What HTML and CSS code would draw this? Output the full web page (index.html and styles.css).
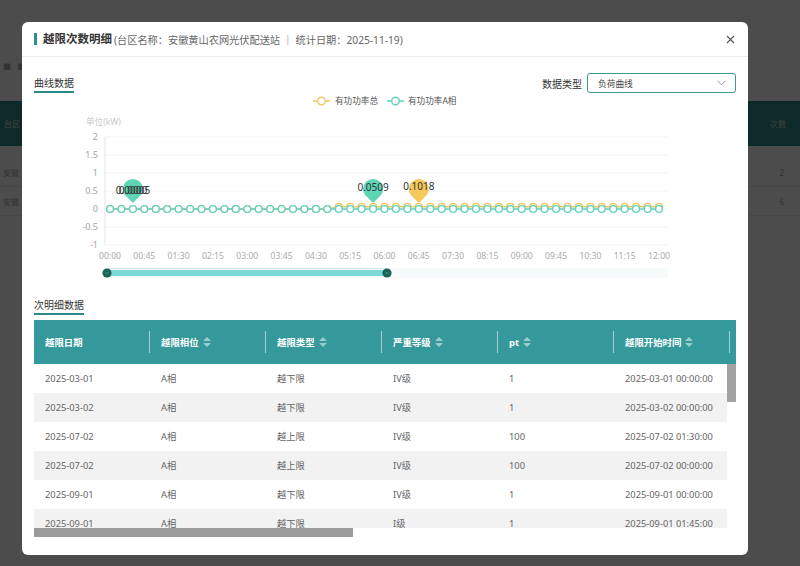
FILE: index.html
```html
<!DOCTYPE html>
<html lang="zh-CN">
<head>
    <meta charset="UTF-8">
    <meta name="viewport" content="width=device-width, initial-scale=1.0">
    <title>越限次数明细</title>
    <link rel="stylesheet" href="styles.css">
</head>
<body>
    <!-- page underneath the dialog -->
    <div class="page">
        <div class="page-filter">
            <span>■</span><span>■</span>
        </div>
        <div class="page-table">
            <div class="page-thead"><span>台区</span><span>次数</span></div>
            <div class="page-rows">
                <div class="page-row"><span>安徽</span><span>2</span></div>
                <div class="page-row"><span>安徽</span><span>6</span></div>
            </div>
        </div>
    </div>

    <div class="mask">
        <div class="modal">
            <div class="modal-header">
                <span class="modal-title">越限次数明细</span>
                <span class="modal-sub">(台区名称：安徽黄山农网光伏配送站 ｜ 统计日期：2025-11-19)</span>
                <span class="modal-close">
                    <svg width="9" height="9" viewBox="0 0 9 9"><path d="M1 1L8 8M8 1L1 8" stroke="#555" stroke-width="1.1" fill="none"/></svg>
                </span>
            </div>

            <div class="modal-body">
                <div class="section-bar">
                    <span class="section-title">曲线数据</span>
                    <div class="type-select">
                        <label>数据类型</label>
                        <div class="select">
                            <span>负荷曲线</span>
                            <svg width="9" height="6" viewBox="0 0 9 6"><path d="M0.5 0.8L4.5 4.8L8.5 0.8" stroke="#888" stroke-width="0.9" fill="none"/></svg>
                        </div>
                    </div>
                </div>

                <svg id="chart" class="chart" width="702" height="190" viewBox="0 0 702 190">
                    <!-- legend -->
                    <g class="legend">
                        <line x1="279" y1="7" x2="296" y2="7" stroke="#f2c75c" stroke-width="1.5"/>
                        <circle cx="287.5" cy="7" r="3.8" fill="#fff" stroke="#f2c75c" stroke-width="1.4"/>
                        <text x="301" y="10">有功功率总</text>
                        <line x1="353" y1="7" x2="370" y2="7" stroke="#62d2c0" stroke-width="1.5"/>
                        <circle cx="361.5" cy="7" r="3.8" fill="#fff" stroke="#62d2c0" stroke-width="1.4"/>
                        <text x="374" y="10">有功功率A相</text>
                    </g>

                    <text class="unit" x="52" y="31">单位(kW)</text>

                    <g class="grid-lines">
                        <line x1="71" y1="43" x2="634" y2="43"/>
                        <line x1="71" y1="61" x2="634" y2="61"/>
                        <line x1="71" y1="79" x2="634" y2="79"/>
                        <line x1="71" y1="97" x2="634" y2="97"/>
                        <line x1="71" y1="115" x2="634" y2="115"/>
                        <line x1="71" y1="133" x2="634" y2="133"/>
                        <line x1="71" y1="151" x2="634" y2="151"/>
                    </g>
                    <line x1="71" y1="43" x2="71" y2="151" stroke="#e3e3e3"/>

                    <g class="y-labels">
                        <text x="64" y="46">2</text>
                        <text x="64" y="64">1.5</text>
                        <text x="64" y="82">1</text>
                        <text x="64" y="100">0.5</text>
                        <text x="64" y="118">0</text>
                        <text x="64" y="136">-0.5</text>
                        <text x="64" y="154">-1</text>
                    </g>

                    <g class="x-labels" id="x-labels"></g>

                    <g id="pins">
                        <path d="M98.9 109L90.9 101A10 10 0 1 1 106.9 101Z" fill="#5ed5b5"/>
                        <path d="M339.1 109L331.1 101A10 10 0 1 1 347.1 101Z" fill="#5ed5b5"/>
                        <path d="M384.8 109L376.8 101A10 10 0 1 1 392.8 101Z" fill="#f5c85b"/>
                        <text class="pin-label" x="97.5" y="99.5">0.0000</text>
                        <text class="pin-label" x="100.5" y="99.5">0.0005</text>
                        <text class="pin-label" x="339.1" y="97">0.0509</text>
                        <text class="pin-label" x="384.8" y="96">0.1018</text>
                    </g>

                    <!-- data zoom slider -->
                    <rect x="71" y="174" width="563" height="10" fill="#f6fafb"/>
                    <line x1="73" y1="174.5" x2="353" y2="174.5" stroke="#dbe7ee"/>
                    <rect x="73" y="176" width="280" height="6" fill="#7bdad6"/>
                    <circle cx="73" cy="179" r="4.6" fill="#1a6554"/>
                    <line x1="71.5" y1="179" x2="74.5" y2="179" stroke="#5fa79a" stroke-width="0.8"/>
                    <circle cx="353" cy="179" r="4.6" fill="#1a6554"/>
                    <line x1="351.5" y1="179" x2="354.5" y2="179" stroke="#5fa79a" stroke-width="0.8"/>
                </svg>

                <div class="section-bar section-bar-table">
                    <span class="section-title">次明细数据</span>
                </div>

                <div class="grid">
                    <div class="grid-head">
                        <div class="th">越限日期</div>
                        <div class="th">越限相位<span class="sort"><i></i><i></i></span></div>
                        <div class="th">越限类型<span class="sort"><i></i><i></i></span></div>
                        <div class="th">严重等级<span class="sort"><i></i><i></i></span></div>
                        <div class="th">pt<span class="sort"><i></i><i></i></span></div>
                        <div class="th">越限开始时间<span class="sort"><i></i><i></i></span></div>
                        <div class="th"></div>
                    </div>
                    <div class="grid-body">
                        <div class="grid-rows">
                            <div class="tr"><div class="td">2025-03-01</div><div class="td">A相</div><div class="td">越下限</div><div class="td">IV级</div><div class="td">1</div><div class="td">2025-03-01 00:00:00</div></div>
                            <div class="tr"><div class="td">2025-03-02</div><div class="td">A相</div><div class="td">越下限</div><div class="td">IV级</div><div class="td">1</div><div class="td">2025-03-02 00:00:00</div></div>
                            <div class="tr"><div class="td">2025-07-02</div><div class="td">A相</div><div class="td">越上限</div><div class="td">IV级</div><div class="td">100</div><div class="td">2025-07-02 01:30:00</div></div>
                            <div class="tr"><div class="td">2025-07-02</div><div class="td">A相</div><div class="td">越上限</div><div class="td">IV级</div><div class="td">100</div><div class="td">2025-07-02 00:00:00</div></div>
                            <div class="tr"><div class="td">2025-09-01</div><div class="td">A相</div><div class="td">越下限</div><div class="td">IV级</div><div class="td">1</div><div class="td">2025-09-01 00:00:00</div></div>
                            <div class="tr"><div class="td">2025-09-01</div><div class="td">A相</div><div class="td">越下限</div><div class="td">I级</div><div class="td">1</div><div class="td">2025-09-01 01:45:00</div></div>
                        </div>
                        <div class="vbar"><div class="vthumb"></div></div>
                    </div>
                    <div class="hbar"><div class="hthumb"></div></div>
                </div>
            </div>
        </div>
    </div>

    <script>
        (function () {
            const NS = 'http://www.w3.org/2000/svg';
            const chart = document.getElementById('chart');
            const pins = document.getElementById('pins');
            const x0 = 76;
            const step = 11.4375;   // one point per 15 min
            const zeroY = 115;
            const perKw = 36;

            // time axis, every 45 minutes
            const xLabels = document.getElementById('x-labels');
            for (let i = 0; i <= 16; i++) {
                const min = i * 45;
                const t = document.createElementNS(NS, 'text');
                t.setAttribute('x', (x0 + i * step * 3).toFixed(1));
                t.setAttribute('y', '165');
                t.textContent = String(Math.floor(min / 60)).padStart(2, '0') + ':' + String(min % 60).padStart(2, '0');
                xLabels.appendChild(t);
            }

            const total = [];
            const phaseA = [];
            for (let i = 0; i <= 48; i++) {
                total.push(i < 20 ? 0 : 0.06);
                phaseA.push(0);
            }

            function drawSeries(values, color) {
                const g = document.createElementNS(NS, 'g');
                const line = document.createElementNS(NS, 'polyline');
                line.setAttribute('points', values.map((v, i) => (x0 + i * step).toFixed(1) + ',' + (zeroY - v * perKw).toFixed(1)).join(' '));
                line.setAttribute('fill', 'none');
                line.setAttribute('stroke', color);
                line.setAttribute('stroke-width', '1.6');
                g.appendChild(line);
                values.forEach((v, i) => {
                    const c = document.createElementNS(NS, 'circle');
                    c.setAttribute('cx', (x0 + i * step).toFixed(1));
                    c.setAttribute('cy', (zeroY - v * perKw).toFixed(1));
                    c.setAttribute('r', '3.4');
                    c.setAttribute('fill', '#fff');
                    c.setAttribute('stroke', color);
                    c.setAttribute('stroke-width', '1.4');
                    g.appendChild(c);
                });
                chart.insertBefore(g, pins);
            }

            drawSeries(total, '#f2c75c');
            drawSeries(phaseA, '#62d2c0');
        })();
    </script>
</body>
</html>
```

FILE: styles.css
```css
* {
    margin: 0;
    padding: 0;
    box-sizing: border-box;
}

body {
    font-family: "Noto Sans", "Noto Sans CJK SC", sans-serif;
    color: #333;
    background-color: #fff;
    width: 800px;
    height: 566px;
    overflow: hidden;
}

/* background page */
.page {
    padding-top: 56px;
}

.page-filter {
    display: flex;
    gap: 6px;
    height: 20px;
    align-items: center;
    padding-left: 3px;
    font-size: 8px;
    color: #aaa;
}

.page-table {
    margin-top: 25px;
}

.page-thead {
    height: 45px;
    background-color: #2f8a8b;
    color: #ddd;
    font-size: 8px;
    display: flex;
    align-items: center;
    justify-content: space-between;
    padding: 0 14px 0 4px;
}

.page-rows {
    padding-top: 12px;
}

.page-row {
    height: 29px;
    border-bottom: 1px solid #eaeaea;
    display: flex;
    align-items: center;
    justify-content: space-between;
    padding: 0 16px 0 3px;
    font-size: 8px;
    color: #aaa;
}

/* dialog */
.mask {
    position: fixed;
    inset: 0;
    background-color: rgba(0, 0, 0, 0.7);
    padding: 22px 0 0 22px;
}

.modal {
    width: 726px;
    height: 533px;
    background-color: #fff;
    border-radius: 6px;
    overflow: hidden;
}

.modal-header {
    height: 35px;
    border-bottom: 1px solid #ececec;
    display: flex;
    align-items: center;
    padding: 0 12px;
}

.modal-title {
    font-size: 11.5px;
    font-weight: 700;
    line-height: 12px;
    color: #333;
    border-left: 3px solid #2f8f8a;
    padding-left: 6px;
}

.modal-sub {
    font-size: 10.2px;
    color: #666;
    margin-left: 2px;
}

.modal-close {
    margin-left: auto;
    margin-right: 1px;
    display: flex;
}

.modal-body {
    padding: 0 12px;
}

.section-bar {
    margin-top: 16px;
    height: 20px;
    display: flex;
    align-items: flex-end;
    justify-content: space-between;
}

.section-bar-table {
    margin-top: 14px;
    height: 17px;
}

.section-title {
    font-size: 10px;
    line-height: 14px;
    padding-bottom: 1px;
    border-bottom: 2px solid #2b8a89;
    color: #333;
}

.type-select {
    display: flex;
    align-items: center;
}

.type-select label {
    font-size: 10px;
    color: #333;
    margin-right: 5px;
}

.select {
    width: 149px;
    height: 20px;
    border: 1px solid #3a9a94;
    border-radius: 3px;
    padding: 0 9px 0 10px;
    display: flex;
    align-items: center;
    justify-content: space-between;
    font-size: 8.7px;
    color: #444;
}

/* chart */
.chart {
    display: block;
    margin-top: 1px;
}

.legend text {
    font-size: 8.6px;
    fill: #555;
}

.unit {
    font-size: 8.6px;
    fill: #c9c9c9;
}

.grid-lines line {
    stroke: #f3f3f3;
}

.y-labels text {
    font-size: 9px;
    fill: #a3a3a3;
    text-anchor: end;
}

.x-labels text {
    font-size: 8.6px;
    fill: #aaa;
    text-anchor: middle;
}

.pin-label {
    font-size: 10px;
    fill: #333;
    text-anchor: middle;
}

/* detail table */
.grid {
    margin-top: 5px;
}

.grid-head {
    height: 44px;
    background-color: #35989a;
    display: flex;
    overflow: hidden;
}

.th {
    flex: 0 0 116px;
    position: relative;
    padding-left: 11px;
    display: flex;
    align-items: center;
    font-size: 9.4px;
    font-weight: 700;
    color: #fff;
    white-space: nowrap;
}

.th::after {
    content: "";
    position: absolute;
    right: 0;
    top: 11px;
    bottom: 11px;
    width: 1px;
    background-color: rgba(255, 255, 255, 0.55);
}

.sort {
    display: inline-flex;
    flex-direction: column;
    gap: 2px;
    margin-left: 4px;
}

.sort i {
    display: block;
    width: 0;
    height: 0;
    border-left: 4px solid transparent;
    border-right: 4px solid transparent;
    border-bottom: 4px solid rgba(255, 255, 255, 0.5);
}

.sort i + i {
    border-bottom: none;
    border-top: 4px solid rgba(255, 255, 255, 0.5);
}

.grid-body {
    display: flex;
    height: 164px;
}

.grid-rows {
    width: 693px;
    overflow: hidden;
}

.tr {
    display: flex;
    width: 1508px;
    height: 29px;
}

.tr:nth-child(even) {
    background-color: #f2f2f2;
}

.td {
    flex: 0 0 116px;
    padding-left: 11px;
    font-size: 9.3px;
    line-height: 29px;
    color: #666;
    white-space: nowrap;
}

.vbar {
    width: 9px;
}

.vthumb {
    height: 38px;
    background-color: #a3a3a3;
}

.hbar {
    height: 9px;
}

.hthumb {
    width: 319px;
    height: 9px;
    background-color: #9b9b9b;
}
```
